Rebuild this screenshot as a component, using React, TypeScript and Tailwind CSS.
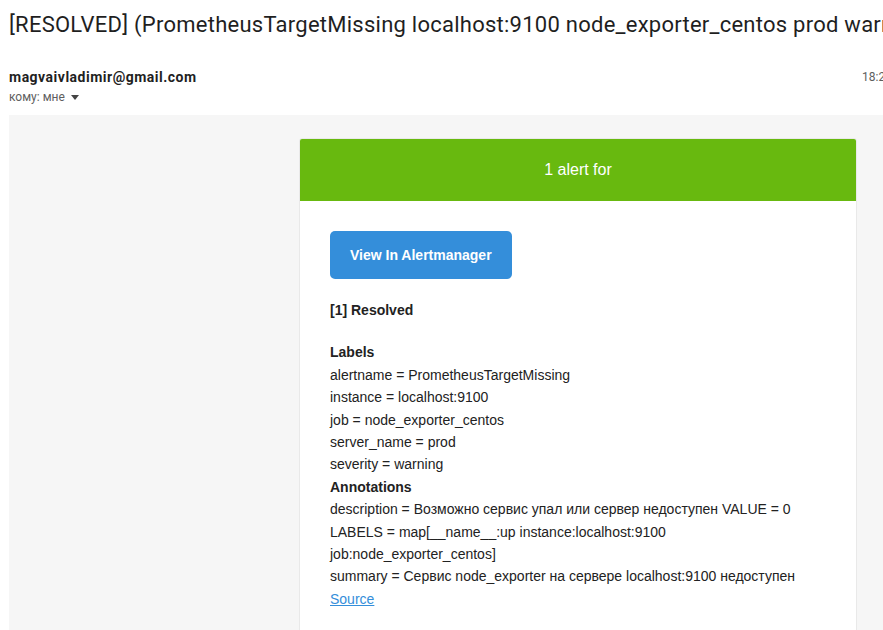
const labels = [
  'alertname = PrometheusTargetMissing',
  'instance = localhost:9100',
  'job = node_exporter_centos',
  'server_name = prod',
  'severity = warning',
];

export default function App() {
  return (
    <div className="w-[883px] h-[630px] overflow-hidden bg-white">
      <div className="w-[900px]">
        <h1 className="pl-[9px] pt-[10px] h-[67px] text-[22px] leading-[30px] tracking-[0.25px] text-[#1f1f1f] whitespace-nowrap font-['Roboto',sans-serif]">
          [RESOLVED] (PrometheusTargetMissing localhost:9100 node_exporter_centos prod warning)
        </h1>
        <div className="flex justify-between pl-[9px] pr-[8px] font-['Roboto',sans-serif]">
          <div>
            <div className="text-[14px] leading-[20px] font-bold tracking-[0.5px] text-[#1f1f1f]">magvaivladimir@gmail.com</div>
            <div className="flex items-center gap-[6px] text-[12px] leading-[20px] text-[#5e5e5e]">
              <span>кому: мне</span>
              <svg width="8" height="5" viewBox="0 0 8 5"><path d="M0 0h8L4 5z" fill="#444" /></svg>
            </div>
          </div>
          <div className="text-[12px] leading-[20px] text-[#5e5e5e]">18:24</div>
        </div>
        <div className="ml-[9px] mt-[8px] bg-[#f6f6f6] pt-[23px] pl-[290px] h-[520px]">
          <div className="w-[558px] border border-[#e9e9e9] rounded-[3px] bg-white overflow-hidden font-['Liberation_Sans',Arial,sans-serif] text-[14px] text-[#222]">
            <div className="bg-[#68b90f] py-[20px] text-center text-white text-[16px] leading-[22px]">1 alert for</div>
            <div className="pt-[30px] pb-[40px] px-[30px]">
              <a className="inline-block bg-[#348eda] text-white font-bold rounded-[5px] px-[20px] py-[10px] leading-[28px]">View In Alertmanager</a>
              <div className="pt-[20px] leading-[22.4px] font-bold">[1] Resolved</div>
              <div className="pt-[20px] leading-[22.4px]">
                <div className="font-bold">Labels</div>
                {labels.map((l) => (
                  <div key={l}>{l}</div>
                ))}
                <div className="font-bold">Annotations</div>
                <div>description = Возможно сервис упал или сервер недоступен VALUE = 0</div>
                <div>LABELS = map[__name__:up instance:localhost:9100</div>
                <div>job:node_exporter_centos]</div>
                <div>summary = Сервис node_exporter на сервере localhost:9100 недоступен</div>
                <a className="text-[#348eda] underline">Source</a>
              </div>
            </div>
          </div>
        </div>
      </div>
    </div>
  );
}
